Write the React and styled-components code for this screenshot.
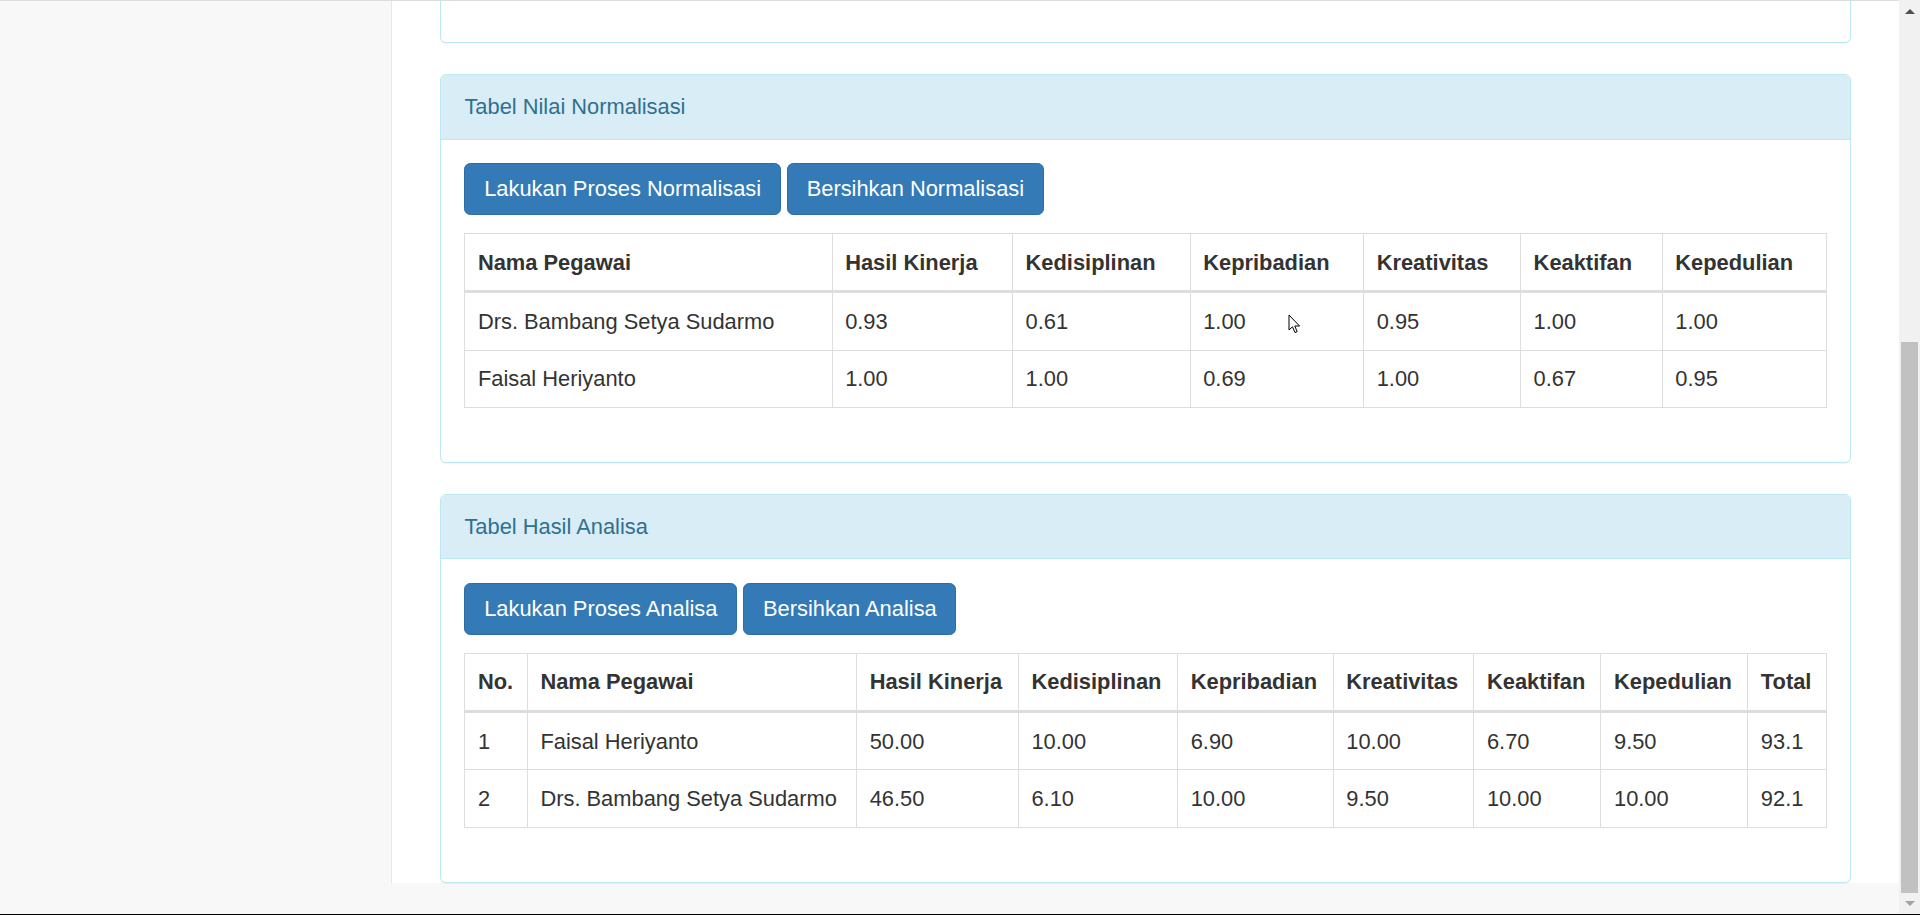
import React from 'react';
import styled, { createGlobalStyle } from 'styled-components';

// page is rendered like bootstrap 3 at 156% zoom (125% x 125%)
const GlobalStyle = createGlobalStyle`
  html, body {
    margin: 0;
    padding: 0;
    width: 1920px;
    height: 915px;
    overflow: hidden;
    background: #f8f8f8;
  }
  * {
    box-sizing: border-box;
  }
`;

const normalisasi = {
  headers: ['Nama Pegawai', 'Hasil Kinerja', 'Kedisiplinan', 'Kepribadian', 'Kreativitas', 'Keaktifan', 'Kepedulian'],
  rows: [
    ['Drs. Bambang Setya Sudarmo', '0.93', '0.61', '1.00', '0.95', '1.00', '1.00'],
    ['Faisal Heriyanto', '1.00', '1.00', '0.69', '1.00', '0.67', '0.95'],
  ],
};

const analisa = {
  headers: ['No.', 'Nama Pegawai', 'Hasil Kinerja', 'Kedisiplinan', 'Kepribadian', 'Kreativitas', 'Keaktifan', 'Kepedulian', 'Total'],
  rows: [
    ['1', 'Faisal Heriyanto', '50.00', '10.00', '6.90', '10.00', '6.70', '9.50', '93.1'],
    ['2', 'Drs. Bambang Setya Sudarmo', '46.50', '6.10', '10.00', '9.50', '10.00', '10.00', '92.1'],
  ],
};

export default function App() {
  return (
    <Frame>
      <GlobalStyle />
      <Screen>
        <PageArea>
          <Layout>
            <Sidebar />
            <Main>
              <Panel>
                <PanelBody $height={300} />
              </Panel>

              <Panel>
                <PanelHeading>Tabel Nilai Normalisasi</PanelHeading>
                <PanelBody>
                  <ButtonRow>
                    <Button>Lakukan Proses Normalisasi</Button>
                    <Button>Bersihkan Normalisasi</Button>
                  </ButtonRow>
                  <DataTable data={normalisasi} />
                </PanelBody>
              </Panel>

              <Panel $last>
                <PanelHeading>Tabel Hasil Analisa</PanelHeading>
                <PanelBody>
                  <ButtonRow>
                    <Button>Lakukan Proses Analisa</Button>
                    <Button>Bersihkan Analisa</Button>
                  </ButtonRow>
                  <DataTable data={analisa} />
                </PanelBody>
              </Panel>
            </Main>
          </Layout>
        </PageArea>

        <Scrollbar>
          <ScrollButton>
            <Arrow $up />
          </ScrollButton>
          <Track>
            <Thumb $height={551} />
          </Track>
          <ScrollButton>
            <Arrow />
          </ScrollButton>
        </Scrollbar>
      </Screen>
      <BottomEdge />

      <Cursor width="14" height="21" viewBox="0 0 14 21">
        <path
          d="M1 1 L1 16 L4.5 12.8 L7 18.6 L9.2 17.7 L6.8 12 L11.6 12 Z"
          fill="#fff"
          stroke="#000"
          strokeWidth="1"
          strokeLinejoin="miter"
        />
      </Cursor>
    </Frame>
  );
}

function DataTable({ data }) {
  return (
    <Table>
      <thead>
        <tr>
          {data.headers.map((h) => (
            <Th key={h}>{h}</Th>
          ))}
        </tr>
      </thead>
      <tbody>
        {data.rows.map((row, i) => (
          <tr key={i}>
            {row.map((cell, j) => (
              <Td key={j}>{cell}</Td>
            ))}
          </tr>
        ))}
      </tbody>
    </Table>
  );
}

const Frame = styled.div`
  position: relative;
  width: 1920px;
  height: 915px;
  display: flex;
  flex-direction: column;
  font-family: "Liberation Sans", Arial, Helvetica, sans-serif;
  font-size: 21.875px;
  line-height: 31.25px;
  color: #333;
`;

const Screen = styled.div`
  display: flex;
  height: 914px;
`;

const BottomEdge = styled.div`
  height: 1px;
  background: #000;
`;

const PageArea = styled.div`
  flex: 1;
  display: flex;
  flex-direction: column;
  justify-content: flex-end;
  overflow: hidden;
  border-top: 1px solid #dcdcdc;
  background: #f8f8f8;
  padding-bottom: 31px;
`;

const Layout = styled.div`
  display: flex;
  flex-shrink: 0;
`;

const Sidebar = styled.div`
  width: 391px;
  flex-shrink: 0;
  background: #f8f8f8;
`;

const Main = styled.div`
  flex: 1;
  background: #fff;
  border-left: 1px solid #e7e7e7;
  padding: 0 48px;
`;

const Panel = styled.div`
  background: #fff;
  border: 1px solid #bce8f1;
  border-radius: 6px;
  box-shadow: 0 1px 1px rgba(0, 0, 0, 0.05);
  margin-bottom: ${(p) => (p.$last ? '0' : '31px')};
`;

const PanelHeading = styled.div`
  padding: 16px 23.4px;
  background: #d9edf7;
  color: #31708f;
  border-bottom: 1px solid #bce8f1;
  border-radius: 5px 5px 0 0;
`;

const PanelBody = styled.div`
  padding: 23.4px;
  ${(p) => (p.$height ? `height: ${p.$height}px;` : '')}
`;

const ButtonRow = styled.div`
  display: flex;
  gap: 6px;
  margin-bottom: 18px;
`;

const Button = styled.button`
  font-family: inherit;
  font-size: 21.875px;
  line-height: 31.25px;
  padding: 9.4px 18.75px;
  color: #fff;
  background-color: #337ab7;
  border: 1px solid #2e6da4;
  border-radius: 6.25px;
  cursor: pointer;
`;

const Table = styled.table`
  width: 100%;
  border-collapse: collapse;
  border: 1px solid #ddd;
  margin-bottom: 31px;
`;

const Th = styled.th`
  text-align: left;
  font-weight: bold;
  padding: 12.5px;
  border: 1px solid #ddd;
  border-bottom: 3px solid #ddd;
  vertical-align: bottom;
  white-space: nowrap;
`;

const Td = styled.td`
  padding: 12.5px;
  border: 1px solid #ddd;
  vertical-align: top;
  white-space: nowrap;
`;

const Scrollbar = styled.div`
  width: 21px;
  flex-shrink: 0;
  background: #f1f1f1;
  display: flex;
  flex-direction: column;
`;

const ScrollButton = styled.div`
  height: 21px;
  display: flex;
  align-items: center;
  justify-content: center;
`;

const Arrow = styled.div`
  width: 0;
  height: 0;
  border-left: 5px solid transparent;
  border-right: 5px solid transparent;
  ${(p) =>
    p.$up
      ? 'border-bottom: 5px solid #505050; margin-top: 2px;'
      : 'border-top: 5px solid #a3a3a3; margin-top: 0;'}
`;

const Track = styled.div`
  flex: 1;
  display: flex;
  flex-direction: column;
  justify-content: flex-end;
  padding: 0 2px;
`;

const Thumb = styled.div`
  height: ${(p) => p.$height}px;
  background: #c1c1c1;
`;

const Cursor = styled.svg`
  position: absolute;
  left: 1288px;
  top: 314px;
  pointer-events: none;
`;
